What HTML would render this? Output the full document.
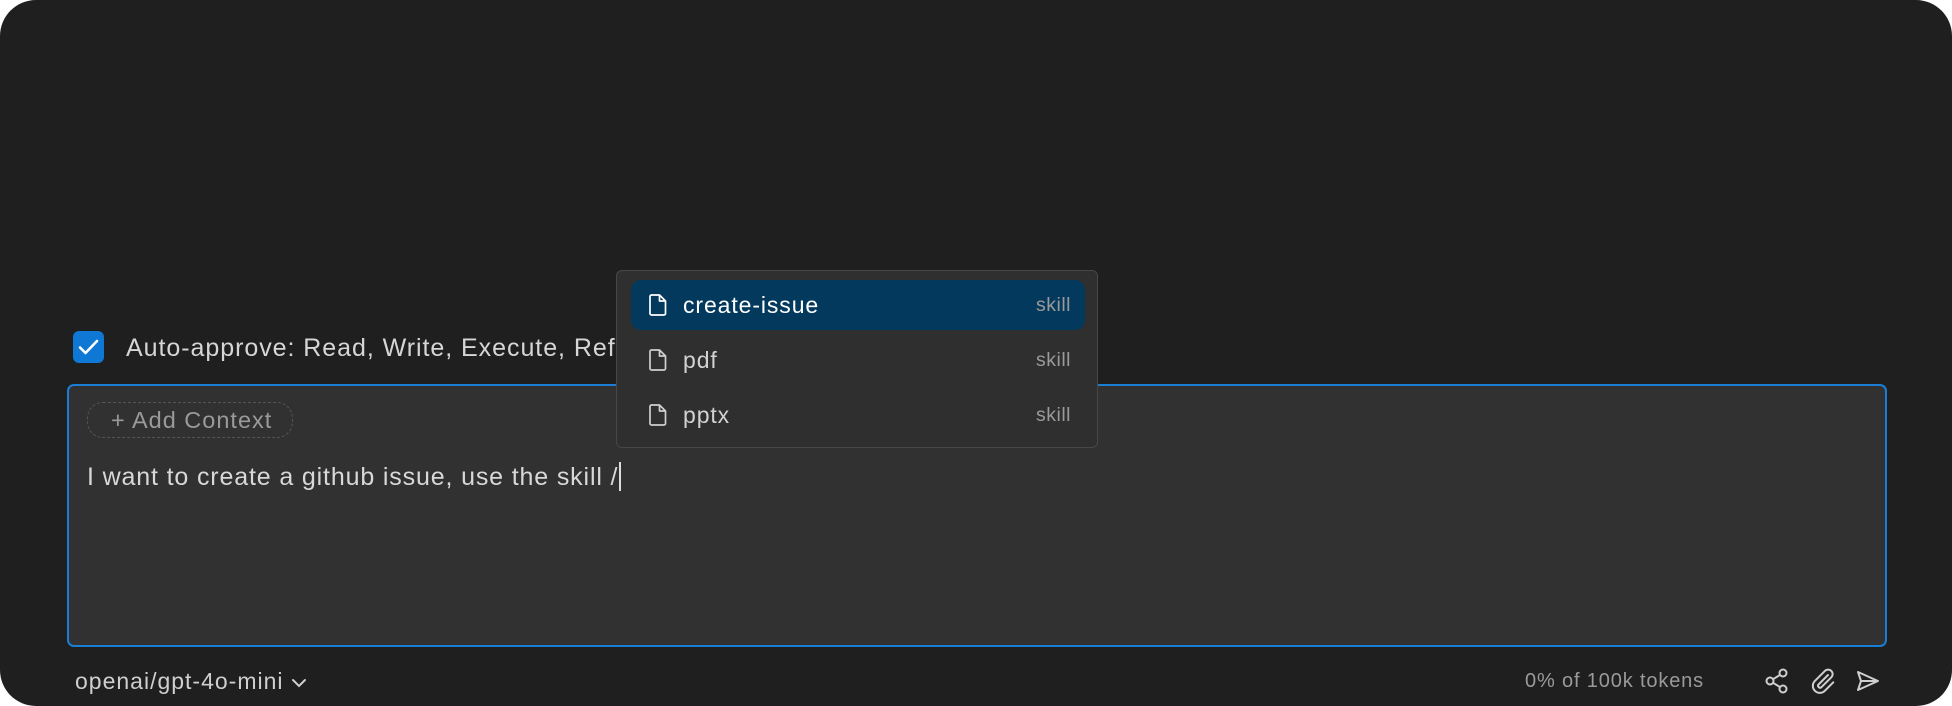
<!DOCTYPE html>
<html><head><style>
html,body{margin:0;padding:0;width:1952px;height:706px;background:#fff;overflow:hidden}
body{font-family:"Liberation Sans",sans-serif}
.win{position:absolute;left:0;top:0;width:1952px;height:706px;background:#1f1f1f;border-radius:36px;overflow:hidden}
.cb{position:absolute;left:73px;top:331px;width:31px;height:32px;background:#0f78d4;border-radius:6px}
.lbl{position:absolute;left:126px;top:333px;font-size:25px;color:#d6d6d6;line-height:30px;letter-spacing:0.95px}
.box{position:absolute;left:67px;top:384px;width:1816px;height:259px;background:#313131;border:2px solid #1a7fd4;border-radius:7px}
.ctx{position:absolute;left:87px;top:402px;width:204px;height:34px;border:1.5px dashed #555;border-radius:16px;color:#9a9a9a;font-size:23.5px;line-height:34px;box-sizing:content-box;letter-spacing:1px}
.ctx span{position:absolute;left:23px;top:0;white-space:nowrap}
.txt{position:absolute;left:87px;top:462px;font-size:25px;color:#d8d8d8;line-height:30px;letter-spacing:0.85px}
.caret{display:inline-block;width:1.5px;height:29px;background:#ddd;vertical-align:-6px;margin-left:1px}
.dd{position:absolute;left:616px;top:270px;width:480px;height:176px;background:#2f2f2f;border:1.5px solid #474747;border-radius:6px}
.row{position:absolute;left:14px;width:454px;height:50px;border-radius:10px}
.row.sel{background:#04395e}
.row svg{position:absolute;left:16px;top:13px}
.row .n{position:absolute;left:52px;top:0;line-height:50px;font-size:23px;color:#d2d2d2;letter-spacing:0.9px}
.row.sel .n{color:#fff}
.row .s{position:absolute;right:14px;top:0;line-height:50px;font-size:19.5px;color:#9a9a9a;letter-spacing:0.5px}
.model{position:absolute;left:75px;top:666px;font-size:23px;color:#cfcfcf;line-height:30px;letter-spacing:1px}
.tok{position:absolute;left:1525px;top:667px;font-size:20px;color:#9a9a9a;line-height:28px;letter-spacing:0.85px}
.ic{position:absolute;top:666px}
</style></head><body>
<div class="win">
<div class="cb"><svg width="31" height="32" viewBox="0 0 31 32"><path d="M7 16.5l5.5 5.5L24 10" stroke="#fff" stroke-width="2.6" fill="none" stroke-linecap="round" stroke-linejoin="round"/></svg></div>
<div class="lbl">Auto-approve: Read, Write, Execute, Ref</div>
<div class="box"></div>
<div class="ctx"><span>+ Add Context</span></div>
<div class="txt">I want to create a github issue, use the skill /<span class="caret"></span></div>
<div class="dd">
 <div class="row sel" style="top:9px"><svg width="22" height="24" viewBox="0 0 22 24"><path d="M3 3.5a1.5 1.5 0 0 1 1.5-1.5h8l6 6v12.5a1.5 1.5 0 0 1-1.5 1.5h-12.5a1.5 1.5 0 0 1-1.5-1.5z M12.5 2v6h6" stroke="#fff" stroke-width="1.7" fill="none" stroke-linejoin="round"/></svg><span class="n">create-issue</span><span class="s">skill</span></div>
 <div class="row" style="top:64px"><svg width="22" height="24" viewBox="0 0 22 24"><path d="M3 3.5a1.5 1.5 0 0 1 1.5-1.5h8l6 6v12.5a1.5 1.5 0 0 1-1.5 1.5h-12.5a1.5 1.5 0 0 1-1.5-1.5z M12.5 2v6h6" stroke="#cfcfcf" stroke-width="1.7" fill="none" stroke-linejoin="round"/></svg><span class="n">pdf</span><span class="s">skill</span></div>
 <div class="row" style="top:119px"><svg width="22" height="24" viewBox="0 0 22 24"><path d="M3 3.5a1.5 1.5 0 0 1 1.5-1.5h8l6 6v12.5a1.5 1.5 0 0 1-1.5 1.5h-12.5a1.5 1.5 0 0 1-1.5-1.5z M12.5 2v6h6" stroke="#cfcfcf" stroke-width="1.7" fill="none" stroke-linejoin="round"/></svg><span class="n">pptx</span><span class="s">skill</span></div>
</div>
<div class="model">openai/gpt-4o-mini <svg width="16" height="12" viewBox="0 0 16 12" style="vertical-align:0px"><path d="M2 3l6 6 6-6" stroke="#cfcfcf" stroke-width="2" fill="none" stroke-linecap="round"/></svg></div>
<div class="tok">0% of 100k tokens</div>
<svg class="ic" style="left:1764px" width="26" height="30" viewBox="0 0 26 30"><circle cx="19" cy="7" r="3.5" stroke="#cfcfcf" stroke-width="2" fill="none"/><circle cx="6" cy="15" r="3.5" stroke="#cfcfcf" stroke-width="2" fill="none"/><circle cx="19" cy="23" r="3.5" stroke="#cfcfcf" stroke-width="2" fill="none"/><path d="M9 13.2l7-4.3M9 16.8l7 4.3" stroke="#cfcfcf" stroke-width="2"/></svg>
<svg class="ic" style="left:1808px" width="28" height="30" viewBox="0 0 28 30"><path d="M20 9l-9.5 9.5a2 2 0 0 0 2.8 2.8l10-10a4.5 4.5 0 0 0-6.4-6.4l-10 10a7 7 0 0 0 9.9 9.9l8.5-8.5" stroke="#cfcfcf" stroke-width="2" fill="none" stroke-linecap="round"/></svg>
<svg class="ic" style="left:1855px" width="26" height="30" viewBox="0 0 26 30"><path d="M3 6l20 9-20 9 3-9z M6 15h17" stroke="#cfcfcf" stroke-width="2" fill="none" stroke-linejoin="round"/></svg>
</div>
</body></html>
